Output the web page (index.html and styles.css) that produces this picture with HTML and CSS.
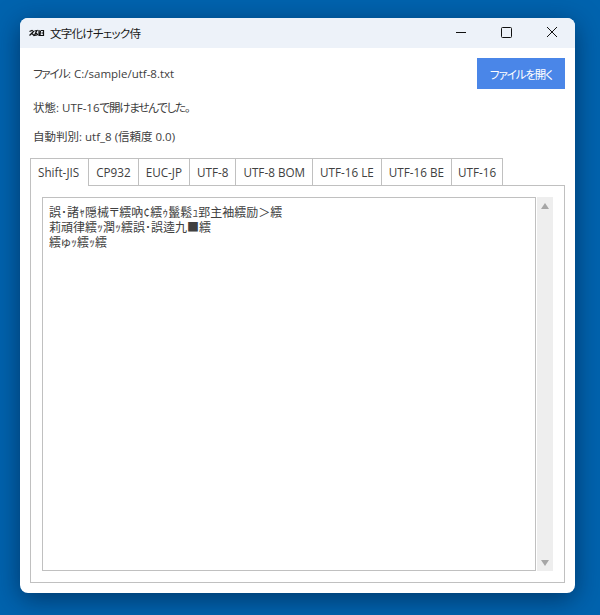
FILE: index.html
```html
<!doctype html>
<html>
    <head>
        <title>文字化けチェック侍</title>
        <link rel="stylesheet" href="styles.css">
    </head>
    <body>
        <div class="window">
            <div class="titlebar">
                <svg class="app-icon" width="16" height="10" viewBox="0 0 16 10">
                    <path d="M0.5 3.5L3 2.5L4.5 3.5L2 6L0.5 7.5M2.5 5L5 7.5M5.5 3L8 2.5L6.5 5L5.5 7.5L8 7M7 5L9 7" fill="none" stroke="#111" stroke-width="1.2"/>
                    <path d="M10 2V8M11.5 2.5L11 7.5L13 7.5M12 2.5H14.5V7.5H12.5M12.5 5H14.5" fill="none" stroke="#111" stroke-width="1.2"/>
                </svg>
                <span class="title">文字化けチェック侍</span>
                <div class="controls">
                    <div class="control">
                        <svg width="16" height="16" viewBox="0 0 16 16"><path d="M4 7.5H14" stroke="#111" stroke-width="1"/></svg>
                    </div>
                    <div class="control">
                        <svg width="16" height="16" viewBox="0 0 16 16"><rect x="3.5" y="2.5" width="10" height="10" rx="1" fill="none" stroke="#111" stroke-width="1"/></svg>
                    </div>
                    <div class="control">
                        <svg width="16" height="16" viewBox="0 0 16 16"><path d="M3 2L13 12M13 2L3 12" stroke="#111" stroke-width="1"/></svg>
                    </div>
                </div>
            </div>

            <div class="content">
                <div class="file-row">
                    <span class="label file-label"><span class="kana">ファイル</span>: C:/sample/utf-8.txt</span>
                    <button class="open-btn">ファイルを開く</button>
                </div>
                <div class="label status">状態: UTF-16<span class="kana">で開けませんでした。</span></div>
                <div class="label detect">自動判別: utf_8 (信頼度 0.0)</div>

                <div class="tabs">
                    <div class="tab active">Shift-JIS</div>
                    <div class="tab">CP932</div>
                    <div class="tab">EUC-JP</div>
                    <div class="tab">UTF-8</div>
                    <div class="tab">UTF-8 BOM</div>
                    <div class="tab">UTF-16 LE</div>
                    <div class="tab">UTF-16 BE</div>
                    <div class="tab">UTF-16</div>
                </div>
                <div class="pane">
                    <div class="textbox">
                        <div class="line">誤･諸ｬ隠械〒繧吶¢繧ｩ鬣鬆ｭ郢主袖繧励＞繧</div>
                        <div class="line">莉頑律繧ｯ潤ｯ繧誤･誤逵九■繧</div>
                        <div class="line">繧ゅｯ繧ｯ繧</div>
                    </div>
                    <div class="scrollbar">
                        <div class="arrow-up"></div>
                        <div class="arrow-down"></div>
                    </div>
                </div>
            </div>
        </div>
    </body>
</html>
```

FILE: styles.css
```css
body {
    margin: 0;
    padding: 18px 25px 22px 20px;
    height: 615px;
    box-sizing: border-box;
    background-color: #0063ae;
    font-family: "Open Sans", "Noto Sans CJK JP", sans-serif;
    font-size: 11.5px;
    font-feature-settings: "palt";
    color: #404040;
    overflow: hidden;
}

.window {
    height: 575px;
    display: flex;
    flex-direction: column;
    background-color: #fff;
    border-radius: 8px;
    overflow: hidden;
    box-shadow: 0 6px 26px rgba(0, 20, 50, 0.55);
}

.titlebar {
    height: 30px;
    flex: none;
    display: flex;
    align-items: center;
    padding-left: 9px;
    background-color: #edf2f9;
}

.app-icon {
    margin-right: 5px;
}

.title {
    color: #1a1a1a;
    letter-spacing: -0.7px;
}

.controls {
    margin-left: auto;
    display: flex;
}

.control {
    width: 46px;
    height: 30px;
    display: flex;
    justify-content: center;
    align-items: center;
}

.content {
    flex: 1;
    display: flex;
    flex-direction: column;
    padding: 10px;
    min-height: 0;
}

.file-row {
    display: flex;
    justify-content: space-between;
    align-items: center;
    height: 31px;
    padding-left: 3px;
}

.file-label {
    margin-bottom: 2px;
}

.kana {
    letter-spacing: -1.2px;
}

.status {
    margin-top: 10px;
    padding-left: 3px;
    height: 18px;
    line-height: 18px;
}

.detect {
    margin-top: 11px;
    padding-left: 3px;
    height: 18px;
    line-height: 18px;
}

.open-btn {
    width: 88px;
    height: 31px;
    padding: 0;
    border: none;
    background-color: #4a86e8;
    color: #fff;
    font-family: inherit;
    font-size: 11.5px;
    font-feature-settings: "palt";
    letter-spacing: -1.1px;
}

.tabs {
    display: flex;
    margin-top: 12px;
    position: relative;
    z-index: 1;
}

.tab {
    height: 27px;
    line-height: 27px;
    padding: 0 7px;
    border: 1px solid #c0c0c0;
    border-left: none;
    border-bottom: none;
    box-sizing: border-box;
    background-color: #fff;
    font-size: 11.7px;
    white-space: nowrap;
}

.tab:first-child {
    border-left: 1px solid #c0c0c0;
}

.tab:last-child {
    padding: 0 6px;
}

.tab.active {
    height: 28px;
    margin-bottom: -1px;
    padding: 0 9px 0 7px;
}

.pane {
    flex: 1;
    display: flex;
    min-height: 0;
    gap: 1px;
    padding: 11px;
    border: 1px solid #c0c0c0;
}

.textbox {
    flex: 1;
    padding: 7px 6px;
    border: 1px solid #c0c0c0;
    font-size: 12px;
}

.line {
    height: 15px;
    line-height: 15px;
    overflow: hidden;
}

.scrollbar {
    width: 16px;
    display: flex;
    flex-direction: column;
    justify-content: space-between;
    align-items: center;
    padding: 6px 0 5px;
    box-sizing: border-box;
    background-color: #eeeeee;
}

.arrow-up {
    border-left: 4.5px solid transparent;
    border-right: 4.5px solid transparent;
    border-bottom: 6px solid #a6a6a6;
}

.arrow-down {
    border-left: 4.5px solid transparent;
    border-right: 4.5px solid transparent;
    border-top: 6px solid #a6a6a6;
}
```
